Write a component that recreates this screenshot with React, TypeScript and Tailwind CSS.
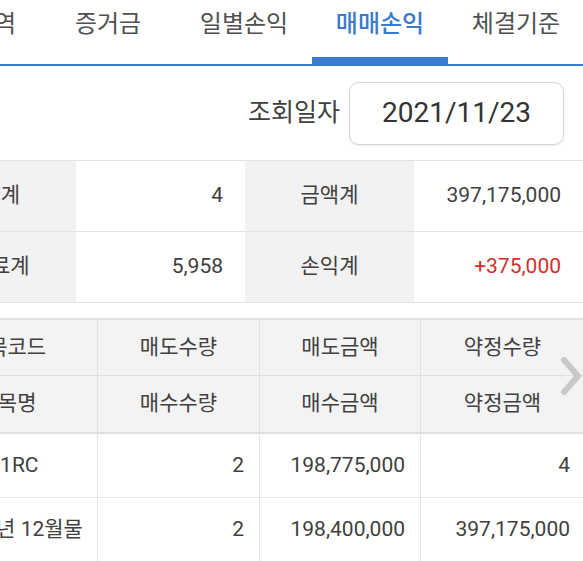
import React from 'react';

const tabs = ['거래내역', '증거금', '일별손익', '매매손익', '체결기준'];

const summary = [
    { label: '수량계', value: '4', label2: '금액계', value2: '397,175,000', red: false },
    { label: '수수료계', value: '5,958', label2: '손익계', value2: '+375,000', red: true },
];

const rows = [
    ['101RC', '2', '198,775,000', '4'],
    ['F 2021년 12월물', '2', '198,400,000', '397,175,000'],
];

export default function App() {
    const active = '매매손익';

    return (
        <div className="w-[583px] h-[561px] overflow-hidden bg-white text-[#404040] font-[Roboto,'Noto_Sans_CJK_KR',sans-serif]">

            {/* Tabs */}
            <div className="flex w-[680px] -ml-[96px] h-[66px] border-b-2 border-[#3d7dcf]">
                {tabs.map((t) => (
                    <div key={t} className="w-[136px] flex flex-col">
                        <div className={t === active
                            ? 'h-[48px] flex items-center justify-center text-[24px] font-medium text-[#3a7bd0] whitespace-nowrap'
                            : 'h-[48px] flex items-center justify-center text-[24px] text-[#505050] whitespace-nowrap'}>
                            {t}
                        </div>
                        <div className="flex-1" />
                        {t === active && <div className="h-[7px] bg-[#3d7dcf]" />}
                    </div>
                ))}
            </div>

            {/* Date */}
            <div className="h-[94px] flex items-center justify-end gap-[9px] pr-[19px]">
                <span className="text-[25px] text-[#404040]">조회일자</span>
                <div className="w-[215px] h-[63px] rounded-[10px] border border-[#d4d4d4] shadow-[0_1px_2px_rgba(0,0,0,0.08)] flex items-center justify-center text-[28px] text-[#333]">
                    2021/11/23
                </div>
            </div>

            {/* Summary */}
            <div className="w-[677px] -ml-[94px] border-t border-[#e3e3e3]">
                {summary.map((r) => (
                    <div key={r.label} className="grid grid-cols-[170px_169px_169px_169px] h-[71px] border-b border-[#e3e3e3] text-[21px]">
                        <div className="bg-[#f2f2f2] flex items-center justify-center">{r.label}</div>
                        <div className="flex items-center justify-end pr-[22px]">{r.value}</div>
                        <div className="bg-[#f2f2f2] flex items-center justify-center">{r.label2}</div>
                        <div className={r.red
                            ? 'flex items-center justify-end pr-[22px] text-[#d0312d]'
                            : 'flex items-center justify-end pr-[22px]'}>{r.value2}</div>
                    </div>
                ))}
            </div>

            {/* Trades table */}
            <div className="relative mt-[15px]">
                <div className="w-[666px] -ml-[82px] border-t-2 border-[#e0e0e0] text-[21px]">
                    <div className="grid grid-cols-[180px_162px_161px_163px] h-[56px] bg-[#f3f3f3] border-b border-[#e0e0e0]">
                        <div className="flex items-center justify-center border-r border-[#e0e0e0]">종목코드</div>
                        <div className="flex items-center justify-center border-r border-[#e0e0e0]">매도수량</div>
                        <div className="flex items-center justify-center border-r border-[#e0e0e0]">매도금액</div>
                        <div className="flex items-center justify-center">약정수량</div>
                    </div>
                    <div className="grid grid-cols-[180px_162px_161px_163px] h-[58px] bg-[#f3f3f3] border-b-2 border-[#e0e0e0]">
                        <div className="flex items-center justify-center border-r border-[#e0e0e0]">종목명</div>
                        <div className="flex items-center justify-center border-r border-[#e0e0e0]">매수수량</div>
                        <div className="flex items-center justify-center border-r border-[#e0e0e0]">매수금액</div>
                        <div className="flex items-center justify-center">약정금액</div>
                    </div>
                    {rows.map((r) => (
                        <div key={r[0]} className="grid grid-cols-[180px_162px_161px_163px] h-[64px] border-b border-[#e6e6e6]">
                            <div className="flex items-center justify-center whitespace-nowrap border-r border-[#e6e6e6]">{r[0]}</div>
                            <div className="flex items-center justify-end pr-[15px] border-r border-[#e6e6e6]">{r[1]}</div>
                            <div className="flex items-center justify-end pr-[15px] border-r border-[#e6e6e6]">{r[2]}</div>
                            <div className="flex items-center justify-end pr-[14px]">{r[3]}</div>
                        </div>
                    ))}
                </div>

                {/* scroll hint */}
                <svg className="absolute right-[1px] top-[38px] w-[22px] h-[40px]" viewBox="0 0 22 40">
                    <polyline points="4,4 18,20 4,36" fill="none" stroke="#c4c4c4" strokeWidth="6" strokeLinecap="round" strokeLinejoin="round" opacity="0.9" />
                </svg>
            </div>
        </div>
    );
}
